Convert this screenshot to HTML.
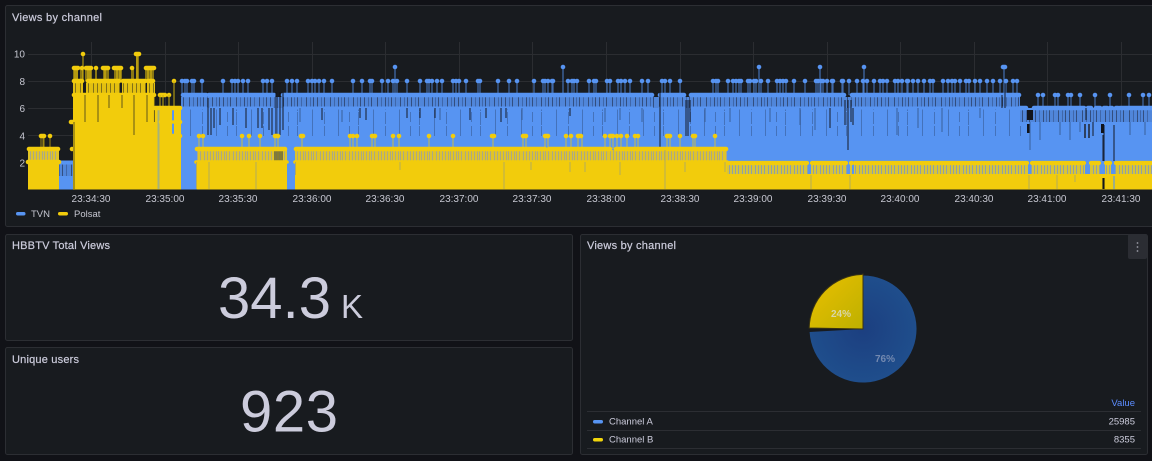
<!DOCTYPE html>
<html><head><meta charset="utf-8"><title>Dashboard</title>
<style>
html,body{margin:0;padding:0;background:#111217}
body{width:1152px;height:461px;overflow:hidden}
svg{display:block}
text{font-family:"Liberation Sans",sans-serif}
</style></head><body>
<svg width="1152" height="461" viewBox="0 0 1152 461" xmlns="http://www.w3.org/2000/svg">
<defs>
<pattern id="bs" patternUnits="userSpaceOnUse" width="47" height="20">
<rect width="47" height="20" fill="#5086da"/>
<path d="M1.5 0V20M9.5 0V20M15.5 0V20M24.5 0V20M31.5 0V20M35.5 0V20M42.5 0V20" stroke="#24365a" stroke-width="1" opacity=".7"/>
<path d="M5.5 0V20M12.5 0V20M19.5 0V20M28.5 0V20M39.5 0V20" stroke="#3a5f9e" stroke-width="1" opacity=".8"/>
</pattern>
<pattern id="bm" patternUnits="userSpaceOnUse" width="61" height="14">
<path d="M7.5 0V14M19.5 0V12M33.5 0V14M44.5 0V10M53.5 0V13" stroke="#3d66a8" stroke-width="1" opacity=".75"/>
</pattern>
<pattern id="ys" patternUnits="userSpaceOnUse" width="29" height="20">
<rect width="29" height="20" fill="#e0c428"/>
<path d="M1.5 0V20M4.5 0V20M7.5 0V20M10.5 0V20M13.5 0V20M15.5 0V20M18.5 0V20M21.5 0V20M23.5 0V20M26.5 0V20" stroke="#aaa987" stroke-width="1"/>
</pattern>
<pattern id="yd" patternUnits="userSpaceOnUse" width="13" height="20">
<rect width="13" height="20" fill="#e3c010"/>
<path d="M2.5 0V20M6.5 0V20M10.5 0V20" stroke="#6f6218" stroke-width="1" opacity=".85"/>
</pattern>
<pattern id="y2" patternUnits="userSpaceOnUse" width="13" height="20">
<rect width="13" height="20" fill="#d8c436"/>
<path d="M1.5 0V20M4.5 0V20M7.5 0V20M10.5 0V20" stroke="#8fa0a8" stroke-width="1"/>
</pattern>
<linearGradient id="gy" x1="0" y1="0" x2="1" y2="1"><stop offset="0" stop-color="#ecc000"/><stop offset="1" stop-color="#bdb000"/></linearGradient>
<radialGradient id="gb" gradientUnits="userSpaceOnUse" cx="863" cy="329" r="54"><stop offset="0" stop-color="#1c3f80"/><stop offset="1" stop-color="#1f4e8c"/></radialGradient>
</defs>

<!-- panels -->
<g fill="#181b1f" stroke="#2c2e33" stroke-width="1">
<rect x="5.5" y="5.5" width="1150" height="221" rx="2"/>
<rect x="5.5" y="234.5" width="567" height="106" rx="2"/>
<rect x="5.5" y="347.5" width="567" height="107" rx="2"/>
<rect x="580.5" y="234.5" width="567" height="220" rx="2"/>
</g>

<!-- grid -->
<path d="M28 54.5H1152M28 81.5H1152M28 108.5H1152M28 135.5H1152M28 162.5H1152M91.5 42V189M165.5 42V189M238.5 42V189M312.5 42V189M385.5 42V189M459.5 42V189M532.5 42V189M606.5 42V189M680.5 42V189M753.5 42V189M827.5 42V189M900.5 42V189M974.5 42V189M1047.5 42V189M1121.5 42V189" stroke="#2b2d31" stroke-width="1" fill="none"/>

<!-- blue series -->
<g>
<path d="M395 67V95M563 67V95M759 67V95M820 67V95M864 67V95M1004 67V95" stroke="#5794f2" stroke-width="1" opacity=".85"/>
<path d="M182 81V95M185 81V95M187 81V95M192 81V95M194 81V95M202 81V95M223 81V95M232 81V95M235 81V95M238 81V95M243 81V95M248 81V95M263 81V95M267 81V95M272 81V95M287 81V95M292 81V95M297 81V95M308 81V95M312 81V95M315 81V95M319 81V95M324 81V95M332 81V95M353 81V95M362 81V95M370 81V95M372 81V95M382 81V95M388 81V95M393 81V95M397 81V95M407 81V95M420 81V95M427 81V95M429 81V95M432 81V95M437 81V95M442 81V95M453 81V95M456 81V95M459 81V95M466 81V95M478 81V95M480 81V95M498 81V95M509 81V95M517 81V95M534 81V95M543 81V95M545 81V95M548 81V95M552 81V95M553 81V95M568 81V95M572 81V95M574 81V95M577 81V95M589 81V95M594 81V95M596 81V95M607 81V95M610 81V95M618 81V95M621 81V95M625 81V95M630 81V95M642 81V95M648 81V95M662 81V95M665 81V95M670 81V95M680 81V95M713 81V95M716 81V95M718 81V95M728 81V95M733 81V95M736 81V95M739 81V95M741 81V95M748 81V95M750 81V95M754 81V95M756 81V95M761 81V95M768 81V95M777 81V95M780 81V95M783 81V95M786 81V95M794 81V95M805 81V95M816 81V95M818 81V95M821 81V95M823 81V95M827 81V95M832 81V95M833 81V95M842 81V95M843 81V95M849 81V95M857 81V95M863 81V95M867 81V95M874 81V95M880 81V95M883 81V95M887 81V95M895 81V95M898 81V95M902 81V95M907 81V95M908 81V95M913 81V95M918 81V95M924 81V95M930 81V95M933 81V95M943 81V95M948 81V95M952 81V95M955 81V95M960 81V95M966 81V95M969 81V95M975 81V95M980 81V95M987 81V95M993 81V95M1000 81V95M1006 81V95M1013 81V95M1017 81V95M1038 95V108M1043 95V108M1055 95V108M1058 95V108M1068 95V108M1071 95V108M1080 95V108M1095 95V108M1110 95V108M1129 95V108M1143 95V108M1149 95V108" stroke="#5794f2" stroke-width="1.2" opacity=".65"/>
<path d="M395 67h0M563 67h0M759 67h0M820 67h0M864 67h0M1003 67h2M182 81h0M185 81h0M187 81h0M192 81h0M194 81h0M202 81h0M223 81h0M232 81h0M235 81h0M238 81h0M243 81h0M248 81h0M263 81h0M267 81h0M272 81h0M287 81h0M292 81h0M297 81h0M308 81h0M312 81h0M315 81h0M319 81h0M324 81h0M332 81h0M353 81h0M362 81h0M370 81h0M372 81h0M382 81h0M388 81h0M393 81h0M397 81h0M407 81h0M420 81h0M427 81h0M429 81h0M432 81h0M437 81h0M442 81h0M453 81h0M456 81h0M459 81h0M466 81h0M478 81h0M480 81h0M498 81h0M509 81h0M517 81h0M534 81h0M543 81h0M545 81h0M548 81h0M552 81h0M553 81h0M568 81h0M572 81h0M574 81h0M577 81h0M589 81h0M594 81h0M596 81h0M607 81h0M610 81h0M618 81h0M621 81h0M625 81h0M630 81h0M642 81h0M648 81h0M662 81h0M665 81h0M670 81h0M680 81h0M713 81h0M716 81h0M718 81h0M728 81h0M733 81h0M736 81h0M739 81h0M741 81h0M748 81h0M750 81h0M754 81h0M756 81h0M761 81h0M768 81h0M777 81h0M780 81h0M783 81h0M786 81h0M794 81h0M805 81h0M816 81h0M818 81h0M821 81h0M823 81h0M827 81h0M832 81h0M833 81h0M842 81h0M843 81h0M849 81h0M857 81h0M863 81h0M867 81h0M874 81h0M880 81h0M883 81h0M887 81h0M895 81h0M898 81h0M902 81h0M907 81h0M908 81h0M913 81h0M918 81h0M924 81h0M930 81h0M933 81h0M943 81h0M948 81h0M952 81h0M955 81h0M960 81h0M966 81h0M969 81h0M975 81h0M980 81h0M987 81h0M993 81h0M1000 81h0M1006 81h0M1013 81h0M1017 81h0M1038 95h0M1043 95h0M1055 95h0M1058 95h0M1068 95h0M1071 95h0M1080 95h0M1095 95h0M1110 95h0M1129 95h0M1143 95h0M1149 95h0" stroke="#5794f2" stroke-width="4.6" stroke-linecap="round" fill="none"/>
<!-- left blue -->
<rect x="59" y="176" width="14" height="13.5" fill="#5794f2"/>
<rect x="59" y="164" width="14" height="12" fill="url(#bs)"/>
<path d="M59 162.5H73" stroke="#5794f2" stroke-width="4"/>
<!-- main stripes / bodies -->
<rect x="181" y="108" width="971" height="81.5" fill="#5794f2"/>
<rect x="181" y="108" width="847" height="28" fill="url(#bm)"/>
<rect x="181" y="97" width="839" height="11" fill="url(#bs)"/>
<rect x="1020" y="110" width="132" height="12" fill="url(#bs)"/>
<path d="M183 95H206M209 95H274M283 95H652M660 95H684M691 95H844M852 95H1019M1020 108H1026M1034 108H1084M1088 108H1091M1096 108H1100M1104 108H1107M1110 108H1112M1116 108H1118M1120 108H1152" stroke="#5794f2" stroke-width="4.6" stroke-linecap="round"/>
<path d="M183 108H206M211 108H245M248 108H272M284 108H652M660 108H684M691 108H844M852 108H1019" stroke="#5794f2" stroke-width="3" stroke-linecap="round"/>
<path d="M276 92V135M280 92V135M283 92V130M208 98V135M211 108V135M214 108V128M220 108V125M233 108V125M246 108V128M258 108V128M262 108V128M269 108V130M272 108V135M322 108V120M360 108V118M366 108V120M407 108V118M420 108V118M435 108V118M470 108V120M486 108V118M501 108V122M506 108V118M570 108V116M660 92V148M686 100V136M688 100V136M690 100V122M830 108V128M845 100V125M848 100V150M851 100V122M853 108V125M1005 84V108M1002 95V108M1086 108V120M1093 122V136M1103 135V161M1104 125V161M1114 125V161" stroke="#10131a" stroke-width="1.1" opacity=".85" fill="none"/>
<rect x="1027" y="110" width="6" height="10" fill="#11141b"/>
<rect x="1027" y="124" width="3" height="9" fill="#11141b"/>
<rect x="1084" y="124" width="2" height="14" fill="#2d405f"/>
<rect x="1088" y="124" width="2" height="14" fill="#2d405f"/>
<rect x="1101" y="124" width="3" height="9" fill="#11141b"/>
<path d="M300 108V122M342 110V122M440 108V120M522 108V120M605 108V122M620 108V120M642 108V122M705 108V122M730 108V122M770 108V122M800 108V125M815 108V130M897 108V135M918 108V128M942 108V132M980 108V118M1040 122V140M1060 122V135M1070 122V140M1080 122V132M1130 122V135M1145 122V135M1030 122V150" stroke="#3a5f99" stroke-width="1" fill="none"/>
</g>

<!-- yellow series -->
<g>
<path d="M41 136V149M43 136V149M44 136V149M50 136V149" stroke="#f2cc0c" stroke-width="1" opacity=".6"/>
<rect x="28" y="162" width="31" height="27.5" fill="#f2cc0c"/>
<rect x="28" y="150" width="31" height="12" fill="url(#ys)"/>
<path d="M29 149H58M28 162H59" stroke="#f2cc0c" stroke-width="4.6" stroke-linecap="round"/>
<!-- tall block -->
<rect x="73" y="95" width="82" height="94.5" fill="#f2cc0c"/>
<path d="M73 83h10v12h-10zM86 83h34v12h-34zM122 83h24v12h-24zM147 83h8v12h-8z" fill="url(#yd)"/>
<path d="M73 68h5v13h-5zM80 68h3v13h-3zM85 68h7v13h-7zM95 68h2v13h-2zM103 68h6v13h-6zM114 68h8v13h-8zM131 68h3v13h-3zM145 68h9v13h-9zM136 54h3v27h-3z" fill="#a88f10" opacity=".8"/>
<path d="M83 54V81M75 70V81M77 70V81M88 70V81M90 70V81M105 70V81M117 70V81M120 70V81M137 56V81M148 70V81M151 70V81" stroke="#f2cc0c" stroke-width="1" opacity=".85"/>
<path d="M83 54h0M136 54h3M74 68h4M82 68h0M86 68h5M96 68h0M103 68h5M114 68h7M132 68h0M146 68h8M74 81h8M88 81h31M123 81h22M148 81h5M74 95h80M160 95h5M169 95h0M174 81h0M71 122h3M72 149h0" stroke="#f2cc0c" stroke-width="4.6" stroke-linecap="round" fill="none"/>
<path d="M174 81V108M163 95V108M169 95V108M160 95V108" stroke="#c9ac10" stroke-width="1"/>
<path d="M85 95V122M134 95V135M98 95V122M109 95V108M147 95V122M122 95V108M74 122V189M154.500 97V122" stroke="#6f6218" stroke-width="1.1" fill="none"/>
<!-- step block -->
<rect x="155" y="108" width="26" height="81.500" fill="#f2cc0c"/>
<rect x="157.500" y="110" width="2" height="79" fill="#a5b27a"/>
<rect x="172" y="110" width="2" height="26" fill="#5794f2"/>
<path d="M155 108H180" stroke="#f2cc0c" stroke-width="4.6" stroke-linecap="round"/>
<path d="M161 122H171M175 122H180M172 136H180" stroke="#f2cc0c" stroke-width="4.6" stroke-linecap="round"/>
<!-- main 3-level -->
<path d="M199 136V149M203 136V149M242 136V149M249 136V149M260 136V149M275 136V149M278 136V149M302 136V149M350 136V149M353 136V149M357 136V149M372 136V149M375 136V149M393 136V149M399 136V149M429 136V149M453 136V149M493 136V149M523 136V149M526 136V149M545 136V149M548 136V149M566 136V149M571 136V149M578 136V149M582 136V149M605 136V149M610 136V149M613 136V149M617 136V149M621 136V149M627 136V149M635 136V149M638 136V149M667 136V149M670 136V149M680 136V149M693 136V149M695 136V149M715 136V149" stroke="#f2cc0c" stroke-width="1.2" opacity=".6"/>
<path d="M199 136h0M203 136h0M242 136h0M249 136h0M260 136h0M275 136h3M301 136h2M350 136h0M353 136h0M357 136h0M372 136h3M393 136h0M399 136h0M429 136h0M453 136h0M492 136h2M523 136h3M545 136h3M566 136h0M571 136h0M578 136h3M605 136h0M610 136h3M617 136h0M621 136h0M627 136h0M635 136h0M638 136h0M667 136h3M680 136h0M693 136h2M715 136h0M41 136h3M50 136h0" stroke="#f2cc0c" stroke-width="4.6" stroke-linecap="round" fill="none"/>
<rect x="197" y="162" width="90" height="27.500" fill="#f2cc0c"/>
<rect x="197" y="150" width="90" height="12" fill="url(#ys)"/>
<rect x="295" y="162" width="432" height="27.500" fill="#f2cc0c"/>
<rect x="295" y="150" width="432" height="12" fill="url(#ys)"/>
<rect x="274" y="150" width="9" height="12" fill="#6f6a35" opacity=".8"/>
<path d="M197 149H285M296 149H545M549 149H610M616 149H726" stroke="#f2cc0c" stroke-width="4.6" stroke-linecap="round"/>
<path d="M196 162H287M295 162H727" stroke="#f2cc0c" stroke-width="3.600" stroke-linecap="round"/>
<!-- low block -->
<rect x="727" y="174" width="425" height="15.500" fill="#f2cc0c"/>
<rect x="727" y="165" width="425" height="9" fill="url(#y2)"/>
<path d="M808 161h3v13h-3zM847 161h3v13h-3zM852 161h2v13h-2zM1028 161h3v13h-3zM1085 161h5v13h-5zM1100 161h5v13h-5zM1111 161h4v13h-4z" fill="#5794f2"/>
<path d="M727 163H807M812 163H846M851 163H852M855 163H1027M1032 163H1084M1091 163H1099M1106 163H1110M1116 163H1152" stroke="#f2cc0c" stroke-width="4.200" stroke-linecap="round"/>
<path d="M504 162V189M665 150V189M620 162V175M196.500 162V189M209 162V189M256 162V189M295.500 162V175M400 162V170M531 162V170M570 162V172M585 162V172M685 162V172M725 162V172M1029 175V189M811 175V189M850 175V189M1057 175V189M1075 175V182" stroke="#b3ab5c" stroke-width="1" fill="none"/>
<path d="M1103 178V189M1104 178V189" stroke="#12151c" stroke-width="1.100" fill="none"/>
<path d="M1114 176V189" stroke="#5794f2" stroke-width="1.100" fill="none"/>
</g>

<!-- axis labels -->
<g font-size="10" fill="#c6c7d1" text-anchor="end">
<text x="25" y="57.500">10</text><text x="25" y="85">8</text><text x="25" y="112">6</text><text x="25" y="139.500">4</text><text x="25" y="166.500">2</text>
</g>
<g font-size="10" fill="#c6c7d1" text-anchor="middle">
<text x="91" y="202">23:34:30</text><text x="165" y="202">23:35:00</text><text x="238" y="202">23:35:30</text><text x="312" y="202">23:36:00</text><text x="385" y="202">23:36:30</text><text x="459" y="202">23:37:00</text><text x="532" y="202">23:37:30</text><text x="606" y="202">23:38:00</text><text x="680" y="202">23:38:30</text><text x="753" y="202">23:39:00</text><text x="827" y="202">23:39:30</text><text x="900" y="202">23:40:00</text><text x="974" y="202">23:40:30</text><text x="1047" y="202">23:41:00</text><text x="1121" y="202">23:41:30</text>
</g>
<!-- legend -->
<rect x="16" y="212" width="9.500" height="3.500" rx="1.700" fill="#5794f2"/>
<rect x="58" y="212" width="10" height="3.500" rx="1.700" fill="#f2cc0c"/>
<g font-size="9.500" fill="#c6c7d1"><text x="31" y="217">TVN</text><text x="74" y="217">Polsat</text></g>

<!-- titles -->
<g font-size="11" fill="#ccccdc" stroke="#ccccdc" stroke-width=".2">
<text x="12" y="21" textLength="90">Views by channel</text>
<text x="12" y="249" textLength="98">HBBTV Total Views</text>
<text x="12" y="363" textLength="67">Unique users</text>
<text x="587" y="249" textLength="89">Views by channel</text>
</g>

<!-- stats -->
<text x="218" y="318" font-size="58" fill="#ccccdc" textLength="113">34.3</text>
<text x="341" y="318" font-size="33" fill="#ccccdc">K</text>
<text x="240" y="431.500" font-size="58" fill="#ccccdc" textLength="98">923</text>

<!-- menu button -->
<rect x="1128" y="234" width="19" height="25" rx="2" fill="#2b2d33"/>
<path d="M1137.500 243h0M1137.500 247h0M1137.500 251h0" stroke="#9a9ba5" stroke-width="1.800" stroke-linecap="round"/>

<!-- pie -->
<path d="M863 329L863 275.500A53.500 53.500 0 1 1 809.600 332Z" fill="url(#gb)"/>
<path d="M863 329L809.200 328A54.500 54.500 0 0 1 861.500 274.500L863 274Z" fill="url(#gy)" stroke="#3a3413" stroke-width="1"/>
<text x="841" y="317" font-size="10" font-weight="700" fill="#d9d6a8" text-anchor="middle">24%</text>
<text x="885" y="362" font-size="10" font-weight="700" fill="#7389b0" text-anchor="middle">76%</text>

<!-- table -->
<text x="1135" y="406" font-size="9.500" fill="#5c8dff" text-anchor="end">Value</text>
<path d="M587 411.500H1141M587 430.500H1141M587 448.500H1141" stroke="#2c2e33" stroke-width="1"/>
<rect x="593" y="420" width="10" height="3.500" rx="1.700" fill="#5794f2"/>
<rect x="593" y="438" width="10" height="3.500" rx="1.700" fill="#f2d60c"/>
<g font-size="9.500" fill="#ccccdc">
<text x="609" y="424.500">Channel A</text><text x="609" y="442.500">Channel B</text>
<text x="1135" y="424.500" text-anchor="end">25985</text><text x="1135" y="442.500" text-anchor="end">8355</text>
</g>
</svg>
</body></html>
